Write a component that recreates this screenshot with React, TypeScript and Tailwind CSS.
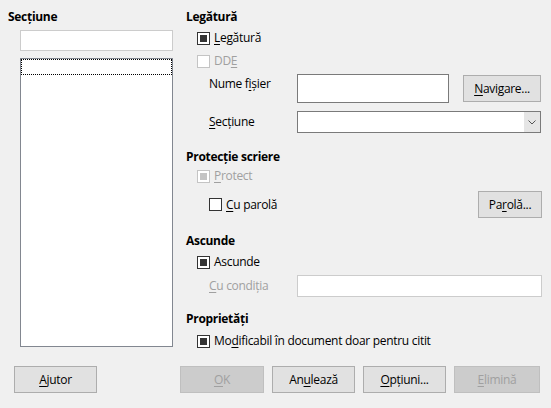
import React from 'react'

type CheckProps = { checked?: boolean; disabled?: boolean }

function Check({ checked, disabled }: CheckProps) {
  return (
    <span
      className={
        'flex h-[13px] w-[13px] shrink-0 items-center justify-center border bg-white ' +
        (disabled ? 'border-[#c4c4c4]' : 'border-[#333333]')
      }
    >
      {checked && (
        <span className={'h-[7px] w-[7px] ' + (disabled ? 'bg-[#c4c4c4]' : 'bg-[#333333]')} />
      )}
    </span>
  )
}

// label text with one underlined mnemonic letter
function Mn({ pre, u, post }: { pre?: string; u: string; post?: string }) {
  return (
    <>
      {pre}
      <span className="underline underline-offset-2">{u}</span>
      {post}
    </>
  )
}

function Btn({
  children,
  w,
  disabled,
}: {
  children: React.ReactNode
  w: string
  disabled?: boolean
}) {
  return (
    <button
      className={
        'flex h-[27px] items-center justify-center border ' +
        w +
        (disabled
          ? ' border-[#bfbfbf] bg-[#cccccc] text-[#a0a0a0]'
          : ' border-[#adadad] bg-[#e1e1e1] text-black')
      }
    >
      {children}
    </button>
  )
}

function Heading({ children, className = '' }: { children: React.ReactNode; className?: string }) {
  return <div className={'h-4 pl-[6px] font-bold leading-4 ' + className}>{children}</div>
}

export default function App() {
  return (
    <div
      className="flex h-[408px] w-[551px] flex-col bg-[#f0f0f0] pt-[9px] text-[12px] leading-4 tracking-[-0.3px] text-black"
      style={{ fontFamily: '"Open Sans", "Noto Sans", sans-serif' }}
    >
      <div className="flex">
        {/* left column */}
        <div className="flex w-[180px] flex-col pl-[8px]">
          <div className="h-4 font-bold">Secțiune</div>
          <div className="ml-[12px] mt-[5px] h-[21px] w-[153px] border border-[#cccccc] bg-white" />
          <div className="ml-[12px] mt-[7px] h-[289px] w-[153px] border border-[#828790] bg-white">
            <div className="h-[16px] w-full border border-dotted border-black" />
          </div>
        </div>

        {/* right column */}
        <div className="flex flex-1 flex-col">
          <Heading>Legătură</Heading>
          <div className="mt-[5px] flex h-4 items-center gap-[4px] pl-[17px]">
            <Check checked />
            <span>
              <Mn u="L" post="egătură" />
            </span>
          </div>
          <div className="mt-[7px] flex h-4 items-center gap-[4px] pl-[17px] text-[#a0a0a0]">
            <Check disabled />
            <span>
              <Mn pre="DD" u="E" />
            </span>
          </div>
          <div className="mt-[5px] flex h-[29px] items-start">
            <span className="w-[117px] pl-[29px] pt-[2px]">
              <Mn pre="Nume f" u="i" post="șier" />
            </span>
            <div className="h-[29px] w-[152px] border border-[#7a7a7a] bg-white" />
            <div className="ml-[14px] mt-[1px]">
              <Btn w="w-[78px]">
                <Mn u="N" post="avigare..." />
              </Btn>
            </div>
          </div>
          <div className="mt-[8px] flex h-[22px] items-center">
            <span className="w-[117px] pl-[29px]">
              <Mn u="S" post="ecțiune" />
            </span>
            <div className="flex h-[22px] w-[244px] justify-end border border-[#7a7a7a] bg-white">
              <div className="flex w-[16px] items-center justify-center bg-[#e5e5e5]">
                <svg width="8" height="5" viewBox="0 0 8 5">
                  <path d="M0.5 0.5 L4 4 L7.5 0.5" fill="none" stroke="#555" strokeWidth="1" />
                </svg>
              </div>
            </div>
          </div>

          <Heading className="mt-[16px]">Protecție scriere</Heading>
          <div className="mt-[3px] flex h-4 items-center gap-[4px] pl-[17px] text-[#a0a0a0]">
            <Check checked disabled />
            <span>
              <Mn u="P" post="rotect" />
            </span>
          </div>
          <div className="mt-[7px] flex h-[27px] items-center">
            <div className="flex items-center gap-[4px] pl-[29px]">
              <Check />
              <span>
                <Mn u="C" post="u parolă" />
              </span>
            </div>
            <div className="ml-auto mr-[9px]">
              <Btn w="w-[64px]">
                <Mn pre="Pa" u="r" post="olă..." />
              </Btn>
            </div>
          </div>

          <Heading className="mt-[15px]">Ascunde</Heading>
          <div className="mt-[5px] flex h-4 items-center gap-[4px] pl-[17px]">
            <Check checked />
            <span>Ascunde</span>
          </div>
          <div className="mt-[5px] flex h-[22px] items-center">
            <span className="w-[117px] pl-[29px] text-[#a0a0a0]">
              <Mn u="C" post="u condiția" />
            </span>
            <div className="h-[22px] w-[245px] border border-[#cccccc] bg-white" />
          </div>

          <Heading className="mt-[14px]">Proprietăți</Heading>
          <div className="mt-[6px] flex h-4 items-center gap-[4px] pl-[17px]">
            <Check checked />
            <span>
              <Mn pre="Mo" u="d" post="ificabil în document doar pentru citit" />
            </span>
          </div>
        </div>
      </div>

      {/* bottom buttons */}
      <div className="mt-[17px] flex">
        <div className="w-[180px] pl-[14px]">
          <Btn w="w-[83px]">
            <Mn u="A" post="jutor" />
          </Btn>
        </div>
        <div className="flex gap-2">
          <Btn w="w-[84px]" disabled>
            <Mn u="O" post="K" />
          </Btn>
          <Btn w="w-[83px]">
            <Mn pre="An" u="u" post="lează" />
          </Btn>
          <Btn w="w-[83px]">
            <Mn u="O" post="pțiuni..." />
          </Btn>
          <Btn w="w-[86px]" disabled>
            <Mn u="E" post="limină" />
          </Btn>
        </div>
      </div>
    </div>
  )
}
